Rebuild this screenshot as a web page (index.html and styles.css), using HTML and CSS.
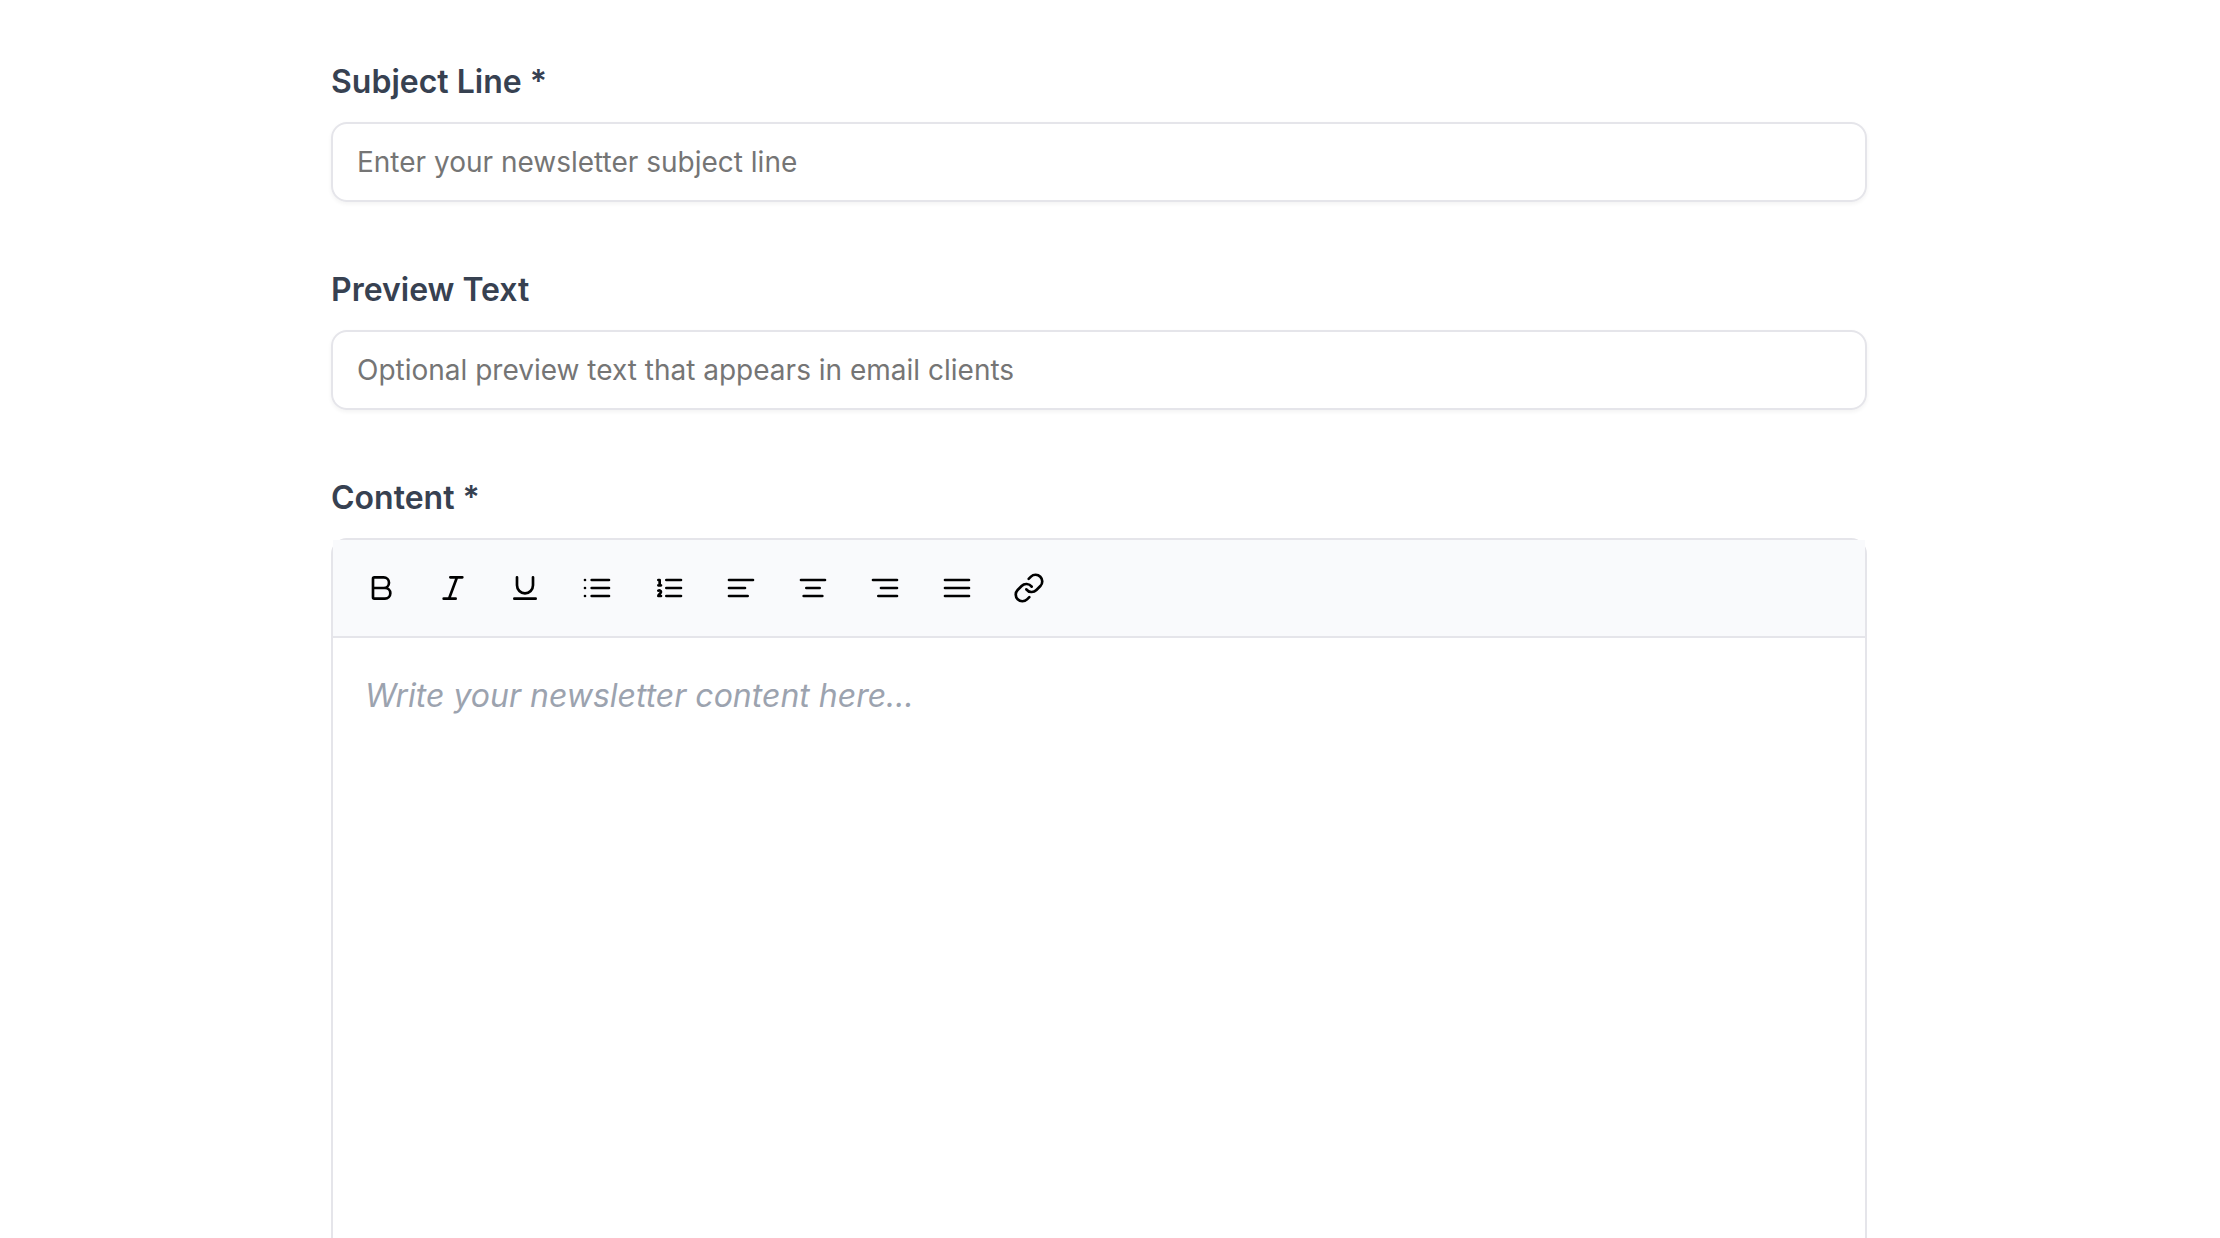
FILE: index.html
```html
<!DOCTYPE html>
<html lang="en">
<head>
    <meta charset="UTF-8">
    <meta name="viewport" content="width=device-width, initial-scale=1.0">
    <title>New Newsletter</title>
    <link rel="stylesheet" href="styles.css">
</head>
<body>
    <form class="newsletter-form">
        <div class="field">
            <label for="subject">Subject Line *</label>
            <input type="text" id="subject" placeholder="Enter your newsletter subject line">
        </div>

        <div class="field">
            <label for="preview">Preview Text</label>
            <input type="text" id="preview" placeholder="Optional preview text that appears in email clients">
        </div>

        <div class="field">
            <label for="content">Content *</label>
            <div class="editor">
                <div class="toolbar" role="toolbar" aria-label="Formatting">
                    <button type="button" aria-label="Bold">
                        <svg viewBox="0 0 24 24"><path d="M6 12h9a4 4 0 0 1 0 8H7a1 1 0 0 1-1-1V5a1 1 0 0 1 1-1h7a4 4 0 0 1 0 8"/></svg>
                    </button>
                    <button type="button" aria-label="Italic">
                        <svg viewBox="0 0 24 24"><path d="M19 4h-9M14 20H5M15 4 9 20"/></svg>
                    </button>
                    <button type="button" aria-label="Underline">
                        <svg viewBox="0 0 24 24"><path d="M6 4v6a6 6 0 0 0 12 0V4M4 20h16"/></svg>
                    </button>
                    <button type="button" aria-label="Bullet list">
                        <svg viewBox="0 0 24 24"><path d="M3 12h.01M3 18h.01M3 6h.01M8 12h13M8 18h13M8 6h13"/></svg>
                    </button>
                    <button type="button" aria-label="Numbered list">
                        <svg viewBox="0 0 24 24"><path d="M10 12h11M10 18h11M10 6h11M4 10h2M4 6h1v4M6 18H4c0-1 2-2 2-3s-1-1.5-2-1"/></svg>
                    </button>
                    <button type="button" aria-label="Align left">
                        <svg viewBox="0 0 24 24"><path d="M15 12H3M17 18H3M21 6H3"/></svg>
                    </button>
                    <button type="button" aria-label="Align center">
                        <svg viewBox="0 0 24 24"><path d="M17 12H7M19 18H5M21 6H3"/></svg>
                    </button>
                    <button type="button" aria-label="Align right">
                        <svg viewBox="0 0 24 24"><path d="M21 12H9M21 18H7M21 6H3"/></svg>
                    </button>
                    <button type="button" aria-label="Justify">
                        <svg viewBox="0 0 24 24"><path d="M3 12h18M3 18h18M3 6h18"/></svg>
                    </button>
                    <button type="button" aria-label="Insert link">
                        <svg viewBox="0 0 24 24"><path d="M10 13a5 5 0 0 0 7.54.54l3-3a5 5 0 0 0-7.07-7.07l-1.72 1.71"/><path d="M14 11a5 5 0 0 0-7.54-.54l-3 3a5 5 0 0 0 7.07 7.07l1.71-1.71"/></svg>
                    </button>
                </div>
                <textarea id="content" placeholder="Write your newsletter content here..."></textarea>
            </div>
        </div>
    </form>
</body>
</html>
```
FILE: styles.css
```css
:root {
    --border-color: #e5e5ea;
    --label-color: #374151;
    --toolbar-color: #f9fafc;
}

* {
    margin: 0;
    padding: 0;
    box-sizing: border-box;
    font-family: Inter, sans-serif;
}

body {
    height: 100vh;
    overflow: hidden;
    padding: 58px 22px 0 0;
    background: white;
}

.newsletter-form {
    display: flex;
    flex-direction: column;
    gap: 64px;
    max-width: 1536px;
    margin: 0 auto;
}

.field {
    display: flex;
    flex-direction: column;
    gap: 16px;
}

label {
    color: var(--label-color);
    font-size: 32px;
    font-weight: 600;
    line-height: 48px;
}

input[type="text"] {
    width: 100%;
    padding: 18px 24px;
    border: 2px solid var(--border-color);
    border-radius: 16px;
    background: transparent;
    box-shadow: 0 2px 4px rgba(0, 0, 0, 0.05);
    font-size: 28px;
    line-height: 40px;
}

input::placeholder {
    color: #757575;
}

.editor {
    border: 2px solid var(--border-color);
    border-radius: 16px;
}

.toolbar {
    display: flex;
    gap: 8px;
    padding: 16px;
    background: var(--toolbar-color);
    border-bottom: 2px solid var(--border-color);
}

.toolbar button {
    display: flex;
    align-items: center;
    justify-content: center;
    width: 64px;
    height: 64px;
    border: none;
    border-radius: 12px;
    background: transparent;
    color: black;
    cursor: pointer;
}

.toolbar button:hover {
    background: #f3f4f6;
}

.toolbar svg {
    width: 32px;
    height: 32px;
    fill: none;
    stroke: currentColor;
    stroke-width: 2;
    stroke-linecap: round;
    stroke-linejoin: round;
}

textarea {
    display: block;
    width: 100%;
    min-height: 800px;
    padding: 32px;
    border: none;
    outline: none;
    resize: none;
    background: transparent;
    font-size: 32px;
    line-height: 52px;
}

textarea::placeholder {
    color: #9ca3af;
    font-style: oblique 14deg;
}
```
